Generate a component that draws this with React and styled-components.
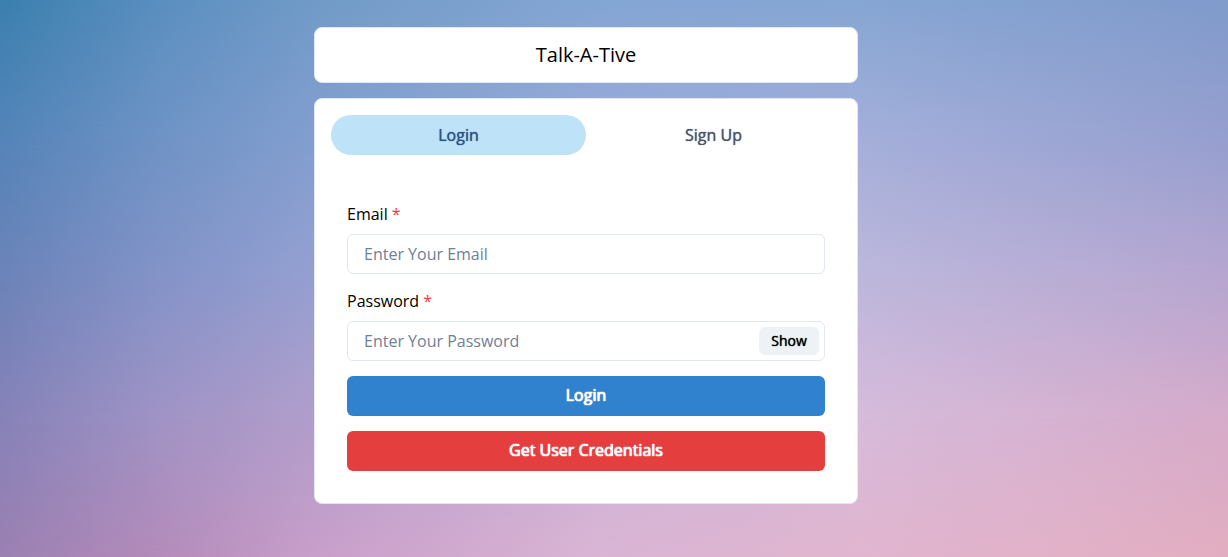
import React, { useState } from "react";
import styled, { createGlobalStyle, css } from "styled-components";

const GlobalStyle = createGlobalStyle`
  *, *::before, *::after { box-sizing: border-box; }
  body {
    margin: 0;
    color: #000;
    font: 400 16px/24px "Open Sans", "Noto Sans", sans-serif;
  }
  button, input { font: inherit; }
`;

/* Backdrop: horizontal colour bands that fade into one another down the page. */
const Page = styled.div`
  position: relative;
  isolation: isolate;
  min-height: 100vh;
  padding: 27px 56px 53px 0;
  background: linear-gradient(90deg, #3a80ae, #5a8fc0 13%, #729bc8 26%, #84a6d5 49%, #86a6d3 70%, #809bcb);
`;

const Band = styled.div`
  position: absolute;
  inset: 0;
  z-index: -1;
  background: linear-gradient(90deg, ${(p) => p.$colors});
  mask-image: linear-gradient(180deg, transparent ${(p) => p.$from}%, #000 ${(p) => p.$from + 25}%);
`;

const bands = [
  { from: 0, colors: "#5484b9, #6f93c5 13%, #839fd0 26%, #9aabd8 49%, #a4afda 70%, #969fcf" },
  { from: 25, colors: "#6c83b8, #8493c8 13%, #96a0d1 26%, #afafda 49%, #bdb7dc 70%, #b7a6d0" },
  { from: 50, colors: "#8682b8, #a093c5 13%, #b29ecb 26%, #cab0d6 49%, #d6bbdb 70%, #d6abca" },
  { from: 75, colors: "#9b80b2, #b48bba 13%, #c99fca 26%, #dab5d4 49%, #e1b5cf 70%, #e2adc0" },
];

const Container = styled.main`
  display: flex;
  flex-direction: column;
  gap: 15px;
  max-width: 576px;
  margin: 0 auto;
  padding: 0 16px;
`;

const surface = css`
  background: #fff;
  border: 1px solid #e2e8f0;
  border-radius: 8px;
`;

const TitleBox = styled.header`
  ${surface}
  padding: 12px;
  text-align: center;
`;

const Title = styled.h1`
  margin: 0;
  font-size: 20px;
  font-weight: 400;
  line-height: 30px;
`;

const Card = styled.section`
  ${surface}
  padding: 16px;
`;

const strongText = css`
  font-weight: 400;
  text-shadow: 0 0 1px currentColor;
`;

const TabList = styled.div`
  display: flex;
`;

const Tab = styled.button`
  ${strongText}
  flex: 1;
  height: 40px;
  padding: 0 16px;
  border: 0;
  border-radius: 20px;
  cursor: pointer;
  color: ${(p) => (p.$active ? "#2c5282" : "#4a5568")};
  background: ${(p) => (p.$active ? "#bee3f8" : "transparent")};
`;

const Form = styled.form`
  display: flex;
  flex-direction: column;
  gap: 15px;
  padding: 47px 16px 16px;
`;

const Field = styled.div`
  display: flex;
  flex-direction: column;
  gap: 8px;
`;

const Required = styled.span`
  margin-left: 4px;
  color: #e53e3e;
`;

const InputBox = styled.div`
  display: flex;
  align-items: center;
  height: 40px;
  padding-right: 5px;
  border: 1px solid #e2e8f0;
  border-radius: 6px;
  &:focus-within { border-color: #3182ce; }
`;

const Input = styled.input`
  flex: 1;
  min-width: 0;
  height: 100%;
  padding: 0 16px;
  border: 0;
  outline: 0;
  background: transparent;
  color: inherit;
  &::placeholder { color: #718096; opacity: 1; }
`;

const ShowButton = styled.button`
  ${strongText}
  width: 60px;
  height: 28px;
  padding: 0;
  border: 0;
  border-radius: 6px;
  background: #edf2f7;
  color: #000;
  font-size: 14px;
  line-height: 20px;
  cursor: pointer;
`;

const SubmitButton = styled.button`
  height: 40px;
  padding: 0 16px 2px;
  border: 0;
  border-radius: 6px;
  background: ${(p) => (p.$danger ? "#e53e3e" : "#3182ce")};
  color: #fff;
  text-shadow: 0 0 1px currentColor, 0 0 1px currentColor, 0 0 1px currentColor;
  cursor: pointer;
`;

export default function App() {
  const [tab, setTab] = useState("Login");
  const [email, setEmail] = useState("");
  const [password, setPassword] = useState("");
  const [visible, setVisible] = useState(false);

  return (
    <Page>
      <GlobalStyle />
      {bands.map((b) => (
        <Band key={b.from} $from={b.from} $colors={b.colors} />
      ))}
      <Container>
        <TitleBox>
          <Title>Talk-A-Tive</Title>
        </TitleBox>
        <Card>
          <TabList role="tablist">
            {["Login", "Sign Up"].map((name) => (
              <Tab
                key={name}
                type="button"
                role="tab"
                aria-selected={tab === name}
                $active={tab === name}
                onClick={() => setTab(name)}
              >
                {name}
              </Tab>
            ))}
          </TabList>
          <Form onSubmit={(e) => e.preventDefault()}>
            <Field>
              <label htmlFor="email">
                Email<Required>*</Required>
              </label>
              <InputBox>
                <Input
                  id="email"
                  type="email"
                  required
                  placeholder="Enter Your Email"
                  value={email}
                  onChange={(e) => setEmail(e.target.value)}
                />
              </InputBox>
            </Field>
            <Field>
              <label htmlFor="password">
                Password<Required>*</Required>
              </label>
              <InputBox>
                <Input
                  id="password"
                  type={visible ? "text" : "password"}
                  required
                  placeholder="Enter Your Password"
                  value={password}
                  onChange={(e) => setPassword(e.target.value)}
                />
                <ShowButton type="button" onClick={() => setVisible(!visible)}>
                  {visible ? "Hide" : "Show"}
                </ShowButton>
              </InputBox>
            </Field>
            <SubmitButton type="submit">Login</SubmitButton>
            <SubmitButton
              type="button"
              $danger
              onClick={() => {
                setEmail("guest@example.com");
                setPassword("123456");
              }}
            >
              Get User Credentials
            </SubmitButton>
          </Form>
        </Card>
      </Container>
    </Page>
  );
}
